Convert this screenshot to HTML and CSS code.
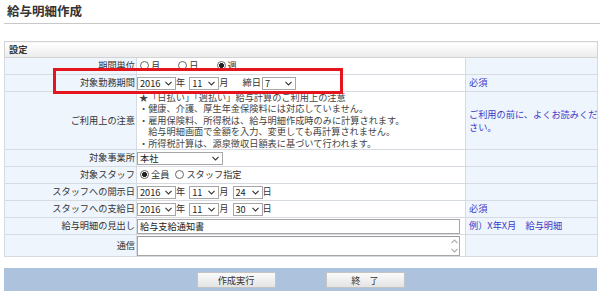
FILE: index.html
```html
<!DOCTYPE html>
<html lang="ja">
  <head>
    <meta charset="UTF-8" />
    <meta name="viewport" content="width=device-width, initial-scale=1.0" />
    <title>給与明細作成</title>
    <link rel="stylesheet" href="styles.css">
  </head>
  <body>
    <h2 class="page-title">給与明細作成</h2>

    <form class="payslip-form" id="payslipForm">
      <div class="form-area">
        <table class="setting-table">
          <colgroup>
            <col class="col-label" />
            <col class="col-value" />
            <col class="col-note" />
          </colgroup>
          <tr>
            <th class="head" colspan="3">設定</th>
          </tr>
          <tr>
            <td class="label">期間単位</td>
            <td class="value">
              <label class="radio radio-wide"><input type="radio" name="unit" value="month" />月</label>
              <label class="radio radio-wide"><input type="radio" name="unit" value="day" />日</label>
              <label class="radio"><input type="radio" name="unit" value="week" checked />週</label>
            </td>
            <td class="note"></td>
          </tr>
          <tr>
            <td class="label">対象勤務期間</td>
            <td class="value">
              <span class="sel sel-year"><select name="work_year"><option>2016</option></select><svg viewBox="0 0 8 5"><path d="M0.5 0.6 L4 4.2 L7.5 0.6" /></svg></span><span class="unit">年</span>
              <span class="sel sel-num"><select name="work_month"><option>11</option></select><svg viewBox="0 0 8 5"><path d="M0.5 0.6 L4 4.2 L7.5 0.6" /></svg></span><span class="unit">月</span>
              <span class="unit unit-close">締日</span><span class="sel sel-close"><select name="close_day"><option>7</option></select><svg viewBox="0 0 8 5"><path d="M0.5 0.6 L4 4.2 L7.5 0.6" /></svg></span>
            </td>
            <td class="note">必須</td>
          </tr>
          <tr>
            <td class="label">ご利用上の注意</td>
            <td class="value notice">
              <div>★「日払い」「週払い」給与計算のご利用上の注意</div>
              <div>・健康、介護、厚生年金保険料には対応していません。</div>
              <div>・雇用保険料、所得税は、給与明細作成時のみに計算されます。</div>
              <div>　給与明細画面で金額を入力、変更しても再計算されません。</div>
              <div>・所得税計算は、源泉徴収日額表に基づいて行われます。</div>
            </td>
            <td class="note note-read">ご利用の前に、よくお読みくだ<br />さい。</td>
          </tr>
          <tr>
            <td class="label">対象事業所</td>
            <td class="value">
              <span class="sel sel-office"><select name="office"><option>本社</option></select><svg viewBox="0 0 8 5"><path d="M0.5 0.6 L4 4.2 L7.5 0.6" /></svg></span>
            </td>
            <td class="note"></td>
          </tr>
          <tr>
            <td class="label">対象スタッフ</td>
            <td class="value">
              <label class="radio"><input type="radio" name="staff" value="all" checked />全員</label>
              <label class="radio"><input type="radio" name="staff" value="select" />スタッフ指定</label>
            </td>
            <td class="note"></td>
          </tr>
          <tr>
            <td class="label">スタッフへの開示日</td>
            <td class="value">
              <span class="sel sel-year"><select name="open_year"><option>2016</option></select><svg viewBox="0 0 8 5"><path d="M0.5 0.6 L4 4.2 L7.5 0.6" /></svg></span><span class="unit">年</span>
              <span class="sel sel-num"><select name="open_month"><option>11</option></select><svg viewBox="0 0 8 5"><path d="M0.5 0.6 L4 4.2 L7.5 0.6" /></svg></span><span class="unit">月</span>
              <span class="sel sel-num"><select name="open_day"><option>24</option></select><svg viewBox="0 0 8 5"><path d="M0.5 0.6 L4 4.2 L7.5 0.6" /></svg></span><span class="unit">日</span>
            </td>
            <td class="note"></td>
          </tr>
          <tr>
            <td class="label">スタッフへの支給日</td>
            <td class="value">
              <span class="sel sel-year"><select name="pay_year"><option>2016</option></select><svg viewBox="0 0 8 5"><path d="M0.5 0.6 L4 4.2 L7.5 0.6" /></svg></span><span class="unit">年</span>
              <span class="sel sel-num"><select name="pay_month"><option>11</option></select><svg viewBox="0 0 8 5"><path d="M0.5 0.6 L4 4.2 L7.5 0.6" /></svg></span><span class="unit">月</span>
              <span class="sel sel-num"><select name="pay_day"><option>30</option></select><svg viewBox="0 0 8 5"><path d="M0.5 0.6 L4 4.2 L7.5 0.6" /></svg></span><span class="unit">日</span>
            </td>
            <td class="note">必須</td>
          </tr>
          <tr>
            <td class="label">給与明細の見出し</td>
            <td class="value">
              <input type="text" class="text-input" name="title" value="給与支給通知書" />
            </td>
            <td class="note">例）X年X月　給与明細</td>
          </tr>
          <tr class="row-message">
            <td class="label">通信</td>
            <td class="value">
              <div class="textarea-box">
                <textarea name="message"></textarea>
                <div class="scroll-arrows">
                  <svg viewBox="0 0 8 5"><path d="M0.5 4.4 L4 0.8 L7.5 4.4" /></svg>
                  <svg viewBox="0 0 8 5"><path d="M0.5 0.6 L4 4.2 L7.5 0.6" /></svg>
                </div>
              </div>
            </td>
            <td class="note"></td>
          </tr>
        </table>
        <!-- 説明用の赤枠 -->
        <div class="highlight"></div>
      </div>

      <div class="button-bar">
        <button type="submit" class="btn">作成実行</button>
        <button type="button" class="btn">終　了</button>
      </div>
    </form>
  </body>
</html>
```

FILE: styles.css
```css
body {
  font-family: "Noto Sans CJK JP", "Noto Sans", sans-serif;
  font-size: 9.2px;
  color: #333;
  background-color: #fff;
  margin: 0;
  padding: 0;
}

.page-title {
  font-size: 12.5px;
  font-weight: bold;
  color: #333;
  margin: 0 0 0 4px;
  padding: 2px 0 4px 3px;
  height: 17px;
  line-height: 17px;
  border-bottom: 1px solid #c8c8c8;
}

.payslip-form {
  margin: 17px 3px 0 4px;
}

.form-area {
  position: relative;
}

.setting-table {
  width: 593px;
  table-layout: fixed;
  border-collapse: collapse;
}

.col-label {
  width: 132px;
}

.col-value {
  width: 329px;
}

.col-note {
  width: 132px;
}

.setting-table th,
.setting-table td {
  border: 1px solid #d6dbe1;
  height: 16px;
  padding: 0;
  vertical-align: middle;
  line-height: 11.4px;
}

.setting-table th.head {
  height: 15px;
}

.head {
  text-align: left;
  font-weight: bold;
  padding-left: 4px !important;
  background: linear-gradient(#ffffff, #ececec);
  border-color: #d3d3d3 !important;
}

.label {
  text-align: right;
  padding-right: 1px !important;
  background-color: #eef5fd;
  white-space: nowrap;
}

.value {
  background-color: #fff;
  white-space: nowrap;
}

.notice {
  color: #444;
  padding-left: 2px !important;
}

.note {
  background-color: #eef5fd;
  color: #3b3bc8;
  padding-left: 3px !important;
  padding-right: 0 !important;
  white-space: nowrap;
}

.note-read {
  line-height: 13px !important;
}

.radio {
  display: inline-flex;
  align-items: center;
  margin-left: 2px;
  margin-right: 1px;
}

.radio-wide {
  margin-right: 13px;
}

.radio input {
  appearance: none;
  width: 9px;
  height: 9px;
  margin: 0 2px 0 1px;
  border: 1px solid #666;
  border-radius: 50%;
  background-color: #fff;
}

.radio input:checked {
  background: radial-gradient(circle, #222 0, #222 2.2px, #fff 2.8px);
}

.sel {
  display: inline-flex;
  align-items: center;
  height: 13px;
  box-sizing: border-box;
  border: 1px solid #a6a6a6;
  background-color: #fff;
  vertical-align: middle;
}

.sel select {
  appearance: none;
  border: none;
  background: transparent;
  font-family: inherit;
  font-size: 9.2px;
  color: #222;
  padding: 0 0 0 2px;
  margin: 0;
  flex: 1;
  min-width: 0;
  height: 11px;
  line-height: 11px;
}

.sel svg {
  width: 7px;
  height: 5px;
  margin-right: 3px;
  flex: none;
}

.sel svg path,
.scroll-arrows svg path {
  fill: none;
  stroke: #333;
  stroke-width: 1.2;
}

.sel-year {
  width: 39px;
}

.sel-num {
  width: 30px;
}

.sel-close {
  width: 34px;
}

.sel-office {
  width: 86px;
}

.unit {
  vertical-align: middle;
  margin-right: 2px;
}

.unit-close {
  margin-left: 10px;
  margin-right: 1px;
}

.text-input {
  display: block;
  width: 323px;
  height: 15px;
  box-sizing: border-box;
  border: 1px solid #a6a6a6;
  padding: 0 2px;
  font-family: inherit;
  font-size: 9.2px;
  color: #222;
}

.row-message td {
  height: 21px;
}

.textarea-box {
  display: flex;
  width: 323px;
  height: 20px;
  box-sizing: border-box;
  border: 1px solid #a6a6a6;
  border-top-color: #999;
  background-color: #fff;
}

.textarea-box textarea {
  flex: 1;
  border: none;
  resize: none;
  padding: 0;
  outline: none;
}

.scroll-arrows {
  width: 10px;
  display: flex;
  flex-direction: column;
  justify-content: space-between;
  align-items: center;
  padding: 2px 0;
}

.scroll-arrows svg {
  width: 7px;
  height: 5px;
}

.scroll-arrows svg path {
  stroke: #aaa;
}

.highlight {
  position: absolute;
  left: 49px;
  top: 27px;
  width: 290px;
  height: 26px;
  box-sizing: border-box;
  border: 3px solid #e5151d;
}

.button-bar {
  display: flex;
  justify-content: center;
  gap: 50px;
  width: 593px;
  height: 23px;
  margin-top: 11px;
  box-sizing: border-box;
  padding-top: 4px;
  background-color: #adc2dc;
}

.btn {
  width: 79px;
  height: 16px;
  padding: 0;
  border: 1px solid #c4c4c4;
  background: linear-gradient(#fbfbfb, #e4e4e4);
  font-family: inherit;
  font-size: 9.2px;
  color: #333;
  cursor: pointer;
}
```
